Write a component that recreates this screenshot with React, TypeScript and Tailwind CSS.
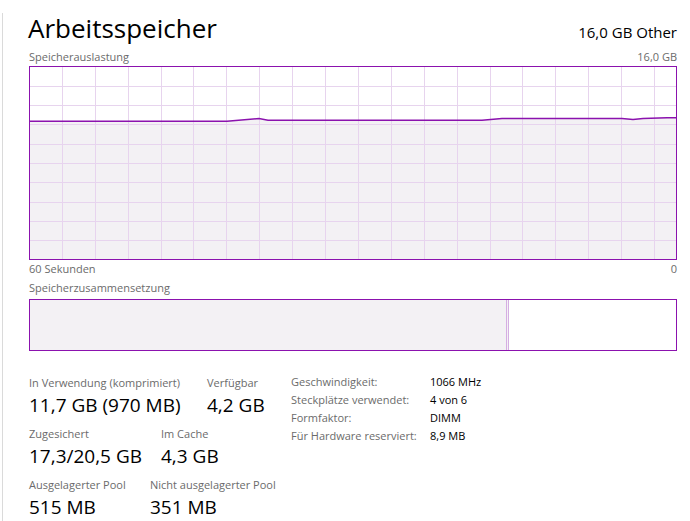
import React from "react";

const PURPLE = "#8b12ae";
const GRID = "#e7d4ee";
const FILL = "#f3f1f4";

const vx = [33, 66, 99, 132, 164, 197, 230, 263, 296, 329, 362, 395, 428, 461, 493, 526, 559, 592, 625];
const hy = [20, 39, 58, 78, 97, 116, 136, 155, 174];
const pts: [number, number][] = [
  [0, 55.2],
  [198, 55.2],
  [230, 52.6],
  [239, 54.2],
  [453, 54.2],
  [473, 52.6],
  [593, 52.6],
  [604, 53.4],
  [614, 52.6],
  [638, 51.8],
  [648, 51.8],
];

function Chart() {
  const line = pts.map((p) => p.join(",")).join(" ");
  const area = line + " 648,194 0,194";
  return (
    <svg width={648} height={194} viewBox="0 0 648 194" className="block">
      <rect x={0} y={0} width={648} height={194} fill="#ffffff" />
      <polygon points={area} fill={FILL} />
      {vx.map((x) => (
        <line key={"v" + x} x1={x + 0.5} y1={0} x2={x + 0.5} y2={194} stroke={GRID} strokeWidth={1} />
      ))}
      {hy.map((y) => (
        <line key={"h" + y} x1={0} y1={y + 0.5} x2={648} y2={y + 0.5} stroke={GRID} strokeWidth={1} />
      ))}
      <polyline points={line} fill="none" stroke={PURPLE} strokeWidth={1.5} />
      <rect x={0.5} y={0.5} width={647} height={193} fill="none" stroke={PURPLE} strokeWidth={1} />
    </svg>
  );
}

function Stat({ label, value }: { label: string; value: string }) {
  return (
    <div className="flex flex-col">
      <div className="text-[11px] leading-[15px] text-[#6b6b6b] whitespace-nowrap">{label}</div>
      <div className="mt-[3px] text-[19px] leading-[24px] text-black whitespace-nowrap">{value}</div>
    </div>
  );
}

export default function App() {
  return (
    <div className="w-[690px] h-[521px] bg-white overflow-hidden flex font-['Open_Sans','Noto_Sans',sans-serif]">
      <div className="w-[2px] shrink-0" />
      <div className="w-px shrink-0 mt-[13px] bg-[#dadada]" />
      <div className="ml-[26px] w-[648px] shrink-0 flex flex-col pt-[14px]">
        <div className="flex justify-between items-baseline h-[28px]">
          <div className="text-[26px] leading-[28px] text-black -ml-px">Arbeitsspeicher</div>
          <div className="text-[15px] leading-[28px] text-black">16,0 GB Other</div>
        </div>
        <div className="mt-[7px] flex justify-between text-[11px] leading-[15px] text-[#6b6b6b]">
          <span>Speicherauslastung</span>
          <span>16,0 GB</span>
        </div>
        <div className="mt-[2px]">
          <Chart />
        </div>
        <div className="mt-[1px] flex justify-between text-[11px] leading-[15px] text-[#6b6b6b]">
          <span>60 Sekunden</span>
          <span>0</span>
        </div>
        <div className="mt-[4px] text-[11px] leading-[15px] text-[#6b6b6b]">Speicherzusammensetzung</div>
        <div className="mt-[4px] h-[52px] border border-[#8b12ae] flex">
          <div className="w-[477px] bg-[#f3f1f4] border-r border-[#d5aee2]" />
          <div className="w-[2px] bg-[#f3f1f4] border-r border-[#d5aee2]" />
          <div className="flex-1 bg-white" />
        </div>
        <div className="mt-[21px] flex items-start">
          <div className="w-[262px] shrink-0 pt-[3px] flex flex-col">
            <div className="flex">
              <div className="w-[178px] shrink-0">
                <Stat label="In Verwendung (komprimiert)" value="11,7 GB (970 MB)" />
              </div>
              <Stat label="Verfügbar" value="4,2 GB" />
            </div>
            <div className="mt-[9px] flex">
              <div className="w-[132px] shrink-0">
                <Stat label="Zugesichert" value="17,3/20,5 GB" />
              </div>
              <Stat label="Im Cache" value="4,3 GB" />
            </div>
            <div className="mt-[9px] flex">
              <div className="w-[121px] shrink-0">
                <Stat label="Ausgelagerter Pool" value="515 MB" />
              </div>
              <Stat label="Nicht ausgelagerter Pool" value="351 MB" />
            </div>
          </div>
          <div className="pt-[1px] grid grid-cols-[139px_auto] text-[11px] leading-[18px]">
            <div className="text-[#6b6b6b]">Geschwindigkeit:</div>
            <div className="text-black">1066 MHz</div>
            <div className="text-[#6b6b6b]">Steckplätze verwendet:</div>
            <div className="text-black">4 von 6</div>
            <div className="text-[#6b6b6b]">Formfaktor:</div>
            <div className="text-black">DIMM</div>
            <div className="text-[#6b6b6b]">Für Hardware reserviert:</div>
            <div className="text-black">8,9 MB</div>
          </div>
        </div>
      </div>
    </div>
  );
}
